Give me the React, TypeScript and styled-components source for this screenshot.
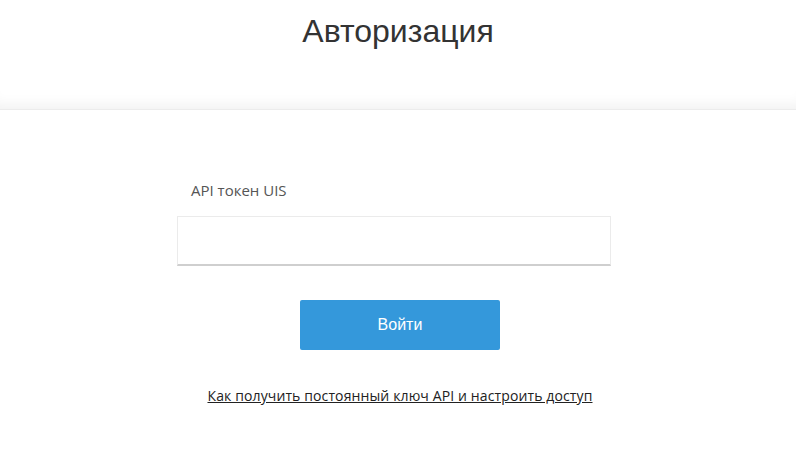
import React from 'react';
import styled, { createGlobalStyle } from 'styled-components';

const GlobalStyle = createGlobalStyle`
  html, body {
    margin: 0;
    padding: 0;
    background: #fff;
  }
  body {
    font-family: "Open Sans", "Liberation Sans", sans-serif;
  }
`;

const Page = styled.div`
  display: flex;
  flex-direction: column;
  min-height: 461px;
  background: #fff;
`;

const Header = styled.header`
  height: 110px;
  display: flex;
  justify-content: center;
  background: #fff;
  box-shadow: inset 0 -14px 14px -10px rgba(0, 0, 0, 0.06);
  border-bottom: 1px solid #ececec;
  box-sizing: border-box;
`;

const Title = styled.h1`
  margin: 13px 0 0;
  font-family: "Liberation Sans", Arial, sans-serif;
  font-weight: 400;
  font-size: 32px;
  line-height: 36px;
  color: #333;
`;

const Form = styled.form`
  display: flex;
  flex-direction: column;
  align-items: center;
  padding-top: 70px;
`;

const Field = styled.div`
  width: 434px;
  margin-right: 8px;
  display: flex;
  flex-direction: column;
`;

const Label = styled.label`
  padding-left: 14px;
  font-size: 15px;
  line-height: 20px;
  color: #555;
  margin-bottom: 16px;
`;

const Input = styled.input`
  box-sizing: border-box;
  height: 50px;
  width: 100%;
  border: 1px solid #ebebeb;
  border-bottom: 2px solid #cfcfcf;
  outline: none;
  padding: 0 12px;
  font-size: 15px;
`;

const Button = styled.button`
  margin-top: 34px;
  margin-left: 4px;
  width: 200px;
  height: 50px;
  border: none;
  border-radius: 2px;
  background: #3498db;
  color: #fff;
  font-family: "Liberation Sans", Arial, sans-serif;
  font-size: 16px;
  cursor: pointer;
`;

const HelpLink = styled.a`
  margin-top: 36px;
  margin-left: 4px;
  font-size: 14px;
  letter-spacing: 0.12px;
  color: #222;
  text-decoration: underline;
`;

export default function App() {
  return (
    <Page>
      <GlobalStyle />
      <Header>
        <Title>Авторизация</Title>
      </Header>
      <Form onSubmit={(e) => e.preventDefault()}>
        <Field>
          <Label htmlFor="token">API токен UIS</Label>
          <Input id="token" type="text" />
        </Field>
        <Button type="submit">Войти</Button>
        <HelpLink href="#">Как получить постоянный ключ API и настроить доступ</HelpLink>
      </Form>
    </Page>
  );
}
